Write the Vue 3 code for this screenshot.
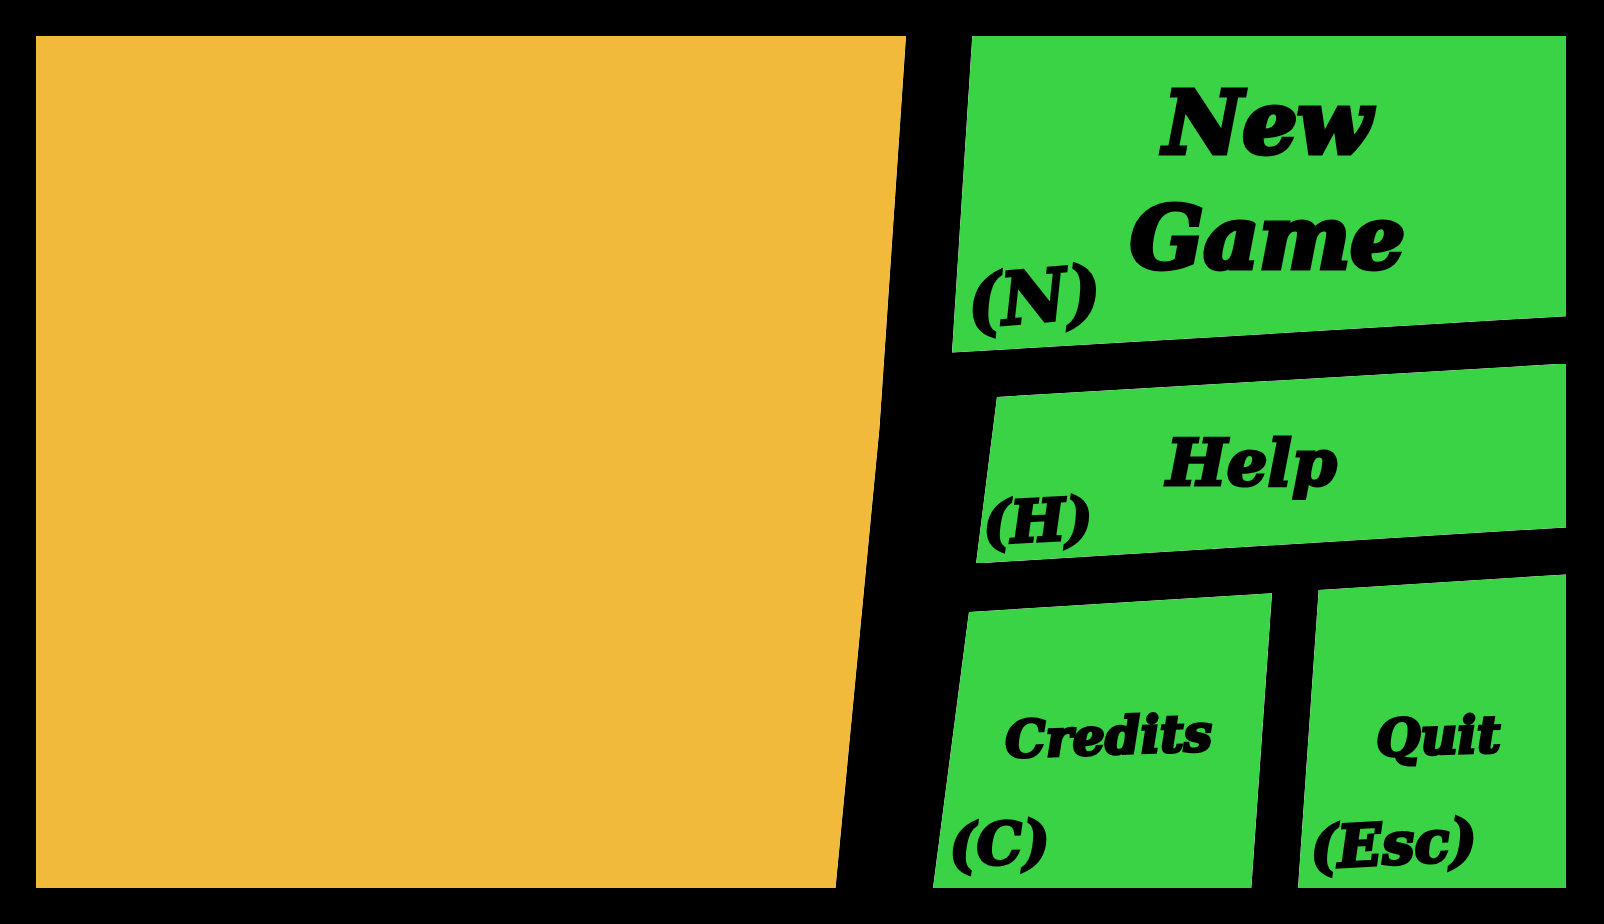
<script setup>
const items = [
  { id: 'new-game', label: 'New Game', hint: 'N' },
  { id: 'help', label: 'Help', hint: 'H' },
  { id: 'credits', label: 'Credits', hint: 'C' },
  { id: 'quit', label: 'Quit', hint: 'Esc' },
]
</script>

<template>
  <main class="menu">
    <section class="stage" aria-label="Preview"></section>
    <nav class="actions" aria-label="Main menu">
      <button v-for="item in items" :key="item.id" type="button" class="panel" :class="item.id">
        <span class="label">{{ item.label }}</span>
        <kbd class="hint">({{ item.hint }})</kbd>
      </button>
    </nav>
  </main>
</template>

<style>
body {
  margin: 0;
  background: #000;
}
</style>

<style scoped>
.menu {
  box-sizing: border-box;
  min-height: 100vh;
  padding: 36px 38px 36px 36px;
  display: grid;
  grid-template-columns: 870fr 633fr;
  gap: 27px;
  background: #000;
  font-family: "DejaVu Serif", "Liberation Serif", serif;
}

.stage {
  position: relative;
  background: #fff;
  clip-path: polygon(0 0, 100% 0, 96.95% 46%, 91.9% 100%, 0 100%);
}

.actions {
  display: grid;
  grid-template-columns: 339fr 268fr;
  grid-template-rows: 317fr 200fr 314fr;
  column-gap: 26px;
  row-gap: 11px;
}

.panel {
  position: relative;
  display: flex;
  align-items: center;
  justify-content: center;
  margin: 0;
  padding: 0;
  border: 0;
  background: #fff;
  color: #000;
  font: inherit;
  font-weight: 700;
  font-style: italic;
  -webkit-text-stroke: 3px #000;
  cursor: pointer;
}

.stage::before,
.panel::before {
  content: "";
  position: absolute;
  inset: 0;
  z-index: -1;
  background: #3ad345;
  clip-path: inherit;
}

.stage::before {
  background: #f2ba3a;
}

.label {
  text-align: center;
}

.hint {
  position: absolute;
  font: inherit;
  font-size: 58px;
  line-height: 64px;
  transform: rotate(-3deg);
}

.new-game {
  grid-column: 1 / -1;
  padding: 0 16px 28px 52px;
  clip-path: polygon(6.2% 0, 100% 0, 100% 88.5%, 3% 100%);
}

.new-game .label {
  width: 320px;
  font-size: 86px;
  line-height: 115px;
  -webkit-text-stroke-width: 5px;
}

.new-game .hint {
  left: 34px;
  bottom: 16px;
  font-size: 72px;
  line-height: 80px;
  transform: rotate(-5deg);
}

.help {
  grid-column: 1 / -1;
  clip-path: polygon(10.1% 16.7%, 100% 0, 100% 82%, 6.8% 100%);
}

.help .label {
  padding-left: 4px;
  font-size: 64px;
  line-height: 76px;
}

.help .hint {
  left: 50px;
  bottom: 10px;
}

.credits {
  padding: 10px 0 0 12px;
  clip-path: polygon(10.6% 12%, 100% 6%, 93.9% 100%, 0 100%);
}

.quit {
  padding: 10px 0 0 12px;
  clip-path: polygon(7.7% 5%, 100% 0, 100% 100%, 0 100%);
}

.credits .label,
.quit .label {
  font-size: 51px;
  line-height: 60px;
  transform: rotate(-2deg);
}

.credits .hint {
  left: 16px;
  bottom: 12px;
}

.quit .hint {
  left: 12px;
  bottom: 12px;
}
</style>
